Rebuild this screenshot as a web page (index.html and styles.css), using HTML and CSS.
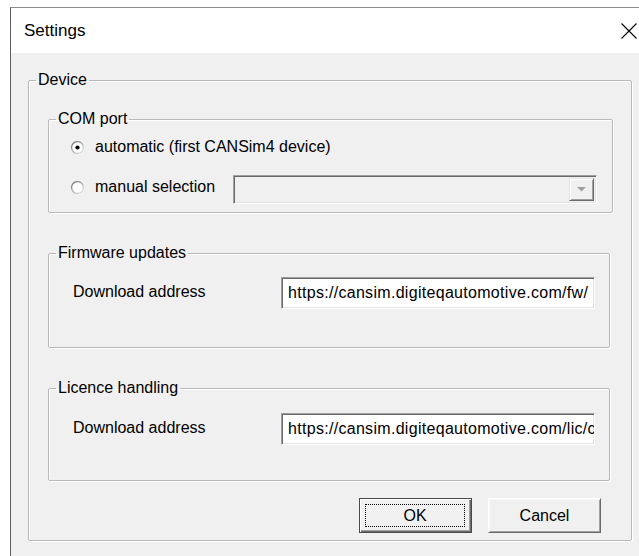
FILE: index.html
```html
<!DOCTYPE html>
<html lang="en">
<head>
<meta charset="utf-8">
<title>Settings</title>
<link rel="stylesheet" href="styles.css">
</head>
<body>
<svg class="defs" width="0" height="0" aria-hidden="true">
  <defs>
    <linearGradient id="radio-rim" x1="0" y1="0" x2="1" y2="1">
      <stop offset="0" stop-color="#6e6e6e"/>
      <stop offset="0.45" stop-color="#a8a8a8"/>
      <stop offset="1" stop-color="#ececec"/>
    </linearGradient>
  </defs>
</svg>
<div class="window">
  <div class="titlebar">
    <span class="title">Settings</span>
    <span class="close">
      <svg width="16" height="16" viewBox="0 0 16 16"><path d="M0.5 0.5 L15.5 15.5 M15.5 0.5 L0.5 15.5" stroke="#000" stroke-width="1.1" fill="none"/></svg>
    </span>
  </div>
  <div class="client">
    <fieldset class="group device">
      <legend>Device</legend>

      <fieldset class="group com">
        <legend>COM port</legend>
        <label class="option">
          <svg class="radio" width="13" height="13" viewBox="0 0 13 13"><circle cx="6.5" cy="6.5" r="5.9" fill="#fff" stroke="url(#radio-rim)" stroke-width="1.3"/><circle cx="6.5" cy="6.5" r="2.1" fill="#000"/></svg>
          <span>automatic (first CANSim4 device)</span>
        </label>
        <div class="option-row">
          <label class="option option-fixed">
            <svg class="radio" width="13" height="13" viewBox="0 0 13 13"><circle cx="6.5" cy="6.5" r="5.9" fill="#fff" stroke="url(#radio-rim)" stroke-width="1.3"/></svg>
            <span>manual selection</span>
          </label>
          <div class="combo">
            <span class="combo-btn">
              <svg width="9" height="5" viewBox="0 0 9 5"><path d="M0 0 H9 L4.5 4.5 Z" fill="#a0a0a0"/></svg>
            </span>
          </div>
        </div>
      </fieldset>

      <fieldset class="group address fw">
        <legend>Firmware updates</legend>
        <div class="field">
          <span class="field-label">Download address</span>
          <div class="edit">https://cansim.digiteqautomotive.com/fw/</div>
        </div>
      </fieldset>

      <fieldset class="group address lic">
        <legend>Licence handling</legend>
        <div class="field">
          <span class="field-label">Download address</span>
          <div class="edit">https://cansim.digiteqautomotive.com/lic/check</div>
        </div>
      </fieldset>

      <div class="buttons">
        <button class="btn btn-default" type="button"><span class="focus-ring">OK</span></button>
        <button class="btn" type="button">Cancel</button>
      </div>
    </fieldset>
  </div>
</div>
</body>
</html>
```

FILE: styles.css
```css
html, body {
  margin: 0;
  height: 100%;
}

body {
  background: #fff;
  overflow: hidden;
  font-family: "Liberation Sans", Arial, sans-serif;
  font-size: 16px;
  color: #000;
}

.defs {
  position: absolute;
  width: 0;
  height: 0;
}

/* dialog frame */
.window {
  margin: 7px 0 0 10px;
  width: 630px;
  height: 560px;
  box-sizing: border-box;
  border-top: 1px solid #8c8c8c;
  border-left: 1px solid #5e5e5e;
  display: flex;
  flex-direction: column;
}

.titlebar {
  height: 45px;
  flex: none;
  background: #fff;
  display: flex;
  align-items: center;
  justify-content: space-between;
}

.title {
  padding-left: 13px;
  padding-top: 1px;
  font-size: 17px;
}

.close {
  width: 22px;
  display: flex;
  justify-content: center;
}

.close svg {
  display: block;
}

.client {
  flex: 1;
  background: #f0f0f0;
}

/* group boxes: the caption sits 7px in from the frame's left edge,
   whatever the box's own left padding is */
.group {
  --pad-left: 0px;
  margin: 0;
  min-inline-size: 0;
  box-sizing: border-box;
  border: 1px solid #b9b9b9;
  border-radius: 2px;
  box-shadow: 1px 1px 0 #fff, inset 1px 1px 0 #fff;
  padding-left: var(--pad-left);
}

.group > legend {
  margin-left: calc(7px - var(--pad-left));
  padding: 0 2px;
  line-height: 18px;
}

.device {
  --pad-left: 19px;
  margin: 18px 0 0 17px;
  width: 604px;
  padding-top: 21px;
  padding-right: 18px;
  padding-bottom: 7px;
}

.com {
  --pad-left: 22px;
  padding-top: 10px;
  padding-right: 15px;
  padding-bottom: 8px;
}

.option {
  display: flex;
  align-items: center;
  height: 18px;
}

.radio {
  flex: none;
  margin-right: 11px;
  display: block;
}

.option-row {
  display: flex;
  align-items: flex-start;
  margin-top: 19px;
}

.option-fixed {
  width: 162px;
  flex: none;
  margin-top: 3px;
}

/* disabled drop-down list */
.combo {
  flex: 1;
  height: 29px;
  box-sizing: border-box;
  background: #f0f0f0;
  border: 1px solid;
  border-color: #a0a0a0 #fff #fff #a0a0a0;
  box-shadow: inset 1px 1px 0 #696969, inset -1px -1px 0 #e3e3e3;
  display: flex;
  justify-content: flex-end;
  padding: 2px 2px 2px 0;
}

.combo-btn {
  width: 25px;
  box-sizing: border-box;
  background: #f0f0f0;
  border: 1px solid;
  border-color: #e3e3e3 #696969 #696969 #e3e3e3;
  box-shadow: inset 1px 1px 0 #fff, inset -1px -1px 0 #a0a0a0;
  display: flex;
  align-items: center;
  justify-content: center;
}

.combo-btn svg {
  display: block;
}

/* address groups */
.address {
  --pad-left: 24px;
  margin-top: 31px;
  margin-right: 3px;
  padding-right: 14px;
}

.fw {
  padding-top: 15px;
  padding-bottom: 38px;
}

.lic {
  padding-top: 16px;
  padding-bottom: 35px;
}

.field {
  display: flex;
  align-items: center;
}

.field-label {
  width: 208px;
  flex: none;
  margin-top: -3px;
}

.edit {
  flex: 1;
  min-width: 0;
  height: 32px;
  box-sizing: border-box;
  background: #fff;
  border: 1px solid;
  border-color: #a0a0a0 #fff #fff #a0a0a0;
  box-shadow: inset 1px 1px 0 #696969, inset -1px -1px 0 #e3e3e3;
  padding: 0 2px 0 6px;
  white-space: nowrap;
  overflow: hidden;
  line-height: 30px;
  letter-spacing: 0.3px;
}

/* push buttons */
.buttons {
  display: flex;
  justify-content: flex-end;
  gap: 16px;
  margin-top: 17px;
  padding-right: 12px;
}

.btn {
  width: 113px;
  height: 35px;
  box-sizing: border-box;
  margin: 0;
  padding: 0;
  font: inherit;
  color: #000;
  background: #f0f0f0;
  border: 1px solid;
  border-color: #fff #696969 #696969 #fff;
  box-shadow: inset 1px 1px 0 #f8f8f8, inset -1px -1px 0 #a0a0a0;
  display: flex;
  align-items: center;
  justify-content: center;
}

.btn-default {
  border-color: #4a4a4a;
  box-shadow: inset 1px 1px 0 #fff, inset -1px -1px 0 #696969, inset -2px -2px 0 #a0a0a0;
  padding: 5px 6px 5px 5px;
}

.focus-ring {
  flex: 1;
  align-self: stretch;
  border: 1px dotted #000;
  display: flex;
  align-items: center;
  justify-content: center;
}
```
